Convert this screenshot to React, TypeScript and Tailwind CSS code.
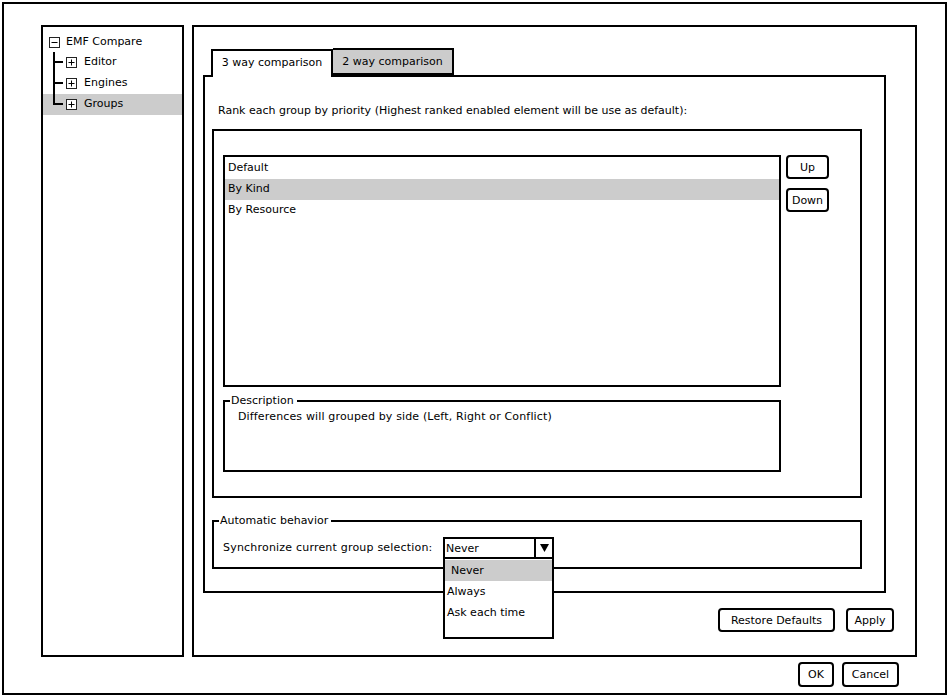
import React from 'react';

const font = { fontFamily: '"DejaVu Sans", "Liberation Sans", sans-serif' };

const SketchButton = ({ label, className = '' }: { label: string; className?: string }) => (
  <button
    className={`h-[24px] border-2 border-black rounded-[4px] bg-white text-[11px] text-black leading-none ${className}`}
  >
    {label}
  </button>
);

const ToggleBox = ({ open }: { open: boolean }) => (
  <svg width="11" height="11" viewBox="0 0 11 11" className="shrink-0">
    <rect x="0.5" y="0.5" width="10" height="10" fill="white" stroke="#222" strokeWidth="1" />
    <line x1="2.5" y1="5.5" x2="8.5" y2="5.5" stroke="black" strokeWidth="1" />
    {!open && <line x1="5.5" y1="2.5" x2="5.5" y2="8.5" stroke="black" strokeWidth="1" />}
  </svg>
);

const TreeBranch = ({ last }: { last: boolean }) => (
  <svg width="14" height="21" viewBox="0 0 14 21" className="shrink-0">
    <line x1="2" y1="0" x2="2" y2={last ? 11 : 21} stroke="black" strokeWidth="2" />
    <line x1="2" y1="10" x2="11" y2="10" stroke="black" strokeWidth="2" />
  </svg>
);

const Tree = () => {
  const children = ['Editor', 'Engines', 'Groups'];
  return (
    <div className="w-[143px] shrink-0 border-2 border-black bg-white pt-[6px]">
      <div className="flex items-center h-[19px] pl-[6px] gap-[6px] text-[11px]">
        <ToggleBox open />
        <span>EMF Compare</span>
      </div>
      {children.map((c, i) => (
        <div
          key={c}
          className={`flex items-center h-[21px] pl-[9px] ${c === 'Groups' ? 'bg-[#cccccc]' : ''}`}
        >
          <TreeBranch last={i === children.length - 1} />
          <ToggleBox open={false} />
          <span className="ml-[7px] text-[11px]">{c}</span>
        </div>
      ))}
    </div>
  );
};

// group title sitting on the top border
const Legend = ({ label }: { label: string }) => (
  <div className="flex items-center h-0 -mt-[1px] pl-[5px]">
    <span className="bg-white pl-[1px] pr-[3px] text-[11px] leading-none -mt-[2px]">{label}</span>
  </div>
);

export default function App() {
  const groups = ['Default', 'By Kind', 'By Resource'];
  const options = ['Never', 'Always', 'Ask each time'];

  return (
    <div className="w-[950px] h-[697px] bg-white p-[2px] text-black" style={font}>
      <div className="w-[945px] h-[693px] border-2 border-black flex flex-col pt-[21px] pl-[37px]">
        <div className="flex gap-[8px] h-[632px]">
          <Tree />

          {/* preference page */}
          <div className="w-[725px] shrink-0 border-2 border-black flex flex-col pt-[21px] pl-[9px]">
            <div className="flex pl-[8px] h-[27px] items-end">
              <div className="w-[122px] h-[28px] border-2 border-b-0 border-black bg-white flex items-center justify-center text-[11px] relative z-10 -mb-[2px] pb-[1px]">
                3 way comparison
              </div>
              <div className="w-[121px] h-[27px] border-2 border-l-0 border-black bg-[#cccccc] flex items-center justify-center text-[11px] pt-[2px]">
                2 way comparison
              </div>
            </div>

            <div className="w-[683px] h-[518px] border-2 border-black flex flex-col pl-[7px] relative">
              <p className="text-[11px] mt-[26px] ml-[6px] h-[26px]">
                Rank each group by priority (Highest ranked enabled element will be use as default):
              </p>

              <div className="w-[650px] h-[369px] border-2 border-black flex flex-col pl-[9px] pt-[24px]">
                <div className="flex gap-[5px]">
                  <div className="w-[558px] h-[232px] border-2 border-black bg-white pt-[1px]">
                    {groups.map((g) => (
                      <div
                        key={g}
                        className={`h-[21px] flex items-center pl-[3px] text-[11px] ${g === 'By Kind' ? 'bg-[#cccccc]' : ''}`}
                      >
                        {g}
                      </div>
                    ))}
                  </div>
                  <div className="flex flex-col gap-[9px]">
                    <SketchButton label="Up" className="w-[43px] h-[24px]" />
                    <SketchButton label="Down" className="w-[43px] h-[24px]" />
                  </div>
                </div>

                <div className="w-[558px] h-[72px] border-2 border-black mt-[13px]">
                  <Legend label="Description" />
                  <p className="text-[11px] mt-[8px] ml-[13px] tracking-[0.15px]">
                    Differences will grouped by side (Left, Right or Conflict)
                  </p>
                </div>
              </div>

              <div className="w-[650px] h-[49px] border-2 border-black mt-[22px]">
                <Legend label="Automatic behavior" />
                <div className="flex items-center mt-[16px] ml-[9px]">
                  <span className="text-[11px] w-[220px] tracking-[0.2px]">Synchronize current group selection:</span>
                  <div className="relative">
                    <div className="w-[111px] h-[22px] border-2 border-black flex items-center bg-white">
                      <span className="flex-1 text-[11px] pl-[1px] pt-[2px]">Never</span>
                      <div className="w-[18px] h-full border-l-2 border-black flex items-center justify-center">
                        <svg width="9" height="8" viewBox="0 0 9 8">
                          <path d="M0 0 H9 L4.5 8 Z" fill="black" />
                        </svg>
                      </div>
                    </div>
                    <div className="absolute left-0 top-[22px] w-[111px] h-[80px] border-2 border-t-0 border-black bg-white z-20 pt-[1px]">
                      {options.map((o) => (
                        <div
                          key={o}
                          className={`h-[21px] flex items-center text-[11px] pt-[2px] ${o === 'Never' ? 'bg-[#cccccc] pl-[6px]' : 'pl-[2px]'}`}
                        >
                          {o}
                        </div>
                      ))}
                    </div>
                  </div>
                </div>
              </div>
            </div>

            <div className="flex justify-end gap-[11px] w-[691px] mt-[15px]">
              <SketchButton label="Restore Defaults" className="w-[117px]" />
              <SketchButton label="Apply" className="w-[48px]" />
            </div>
          </div>
        </div>

        <div className="flex justify-end gap-[8px] w-[858px] mt-[5px]">
          <SketchButton label="OK" className="w-[36px] h-[25px]" />
          <SketchButton label="Cancel" className="w-[57px] h-[25px]" />
        </div>
      </div>
    </div>
  );
}
